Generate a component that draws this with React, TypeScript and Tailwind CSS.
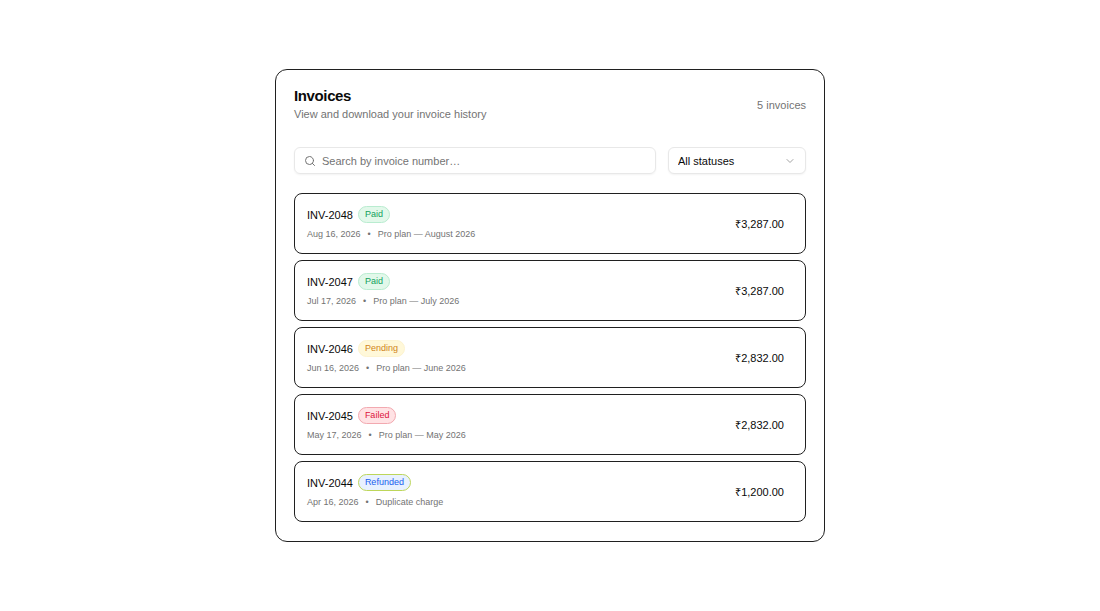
import { ChevronDown, Search } from "lucide-react";

type Status = "Paid" | "Pending" | "Failed" | "Refunded";

const badgeStyles: Record<Status, string> = {
  Paid: "bg-[#e2f8ea] border-[#b9ecd0] text-[#12a05c]",
  Pending: "bg-[#fff8d9] border-[#fdf3cf] text-[#d08420]",
  Failed: "bg-[#ffe2e4] border-[#f2a9b0] text-[#dc143c]",
  Refunded: "bg-[#e8f1ff] border-[#bdd65a] text-[#2060ee]",
};

const invoices: { id: string; status: Status; date: string; note: string; amount: string }[] = [
  { id: "INV-2048", status: "Paid", date: "Aug 16, 2026", note: "Pro plan — August 2026", amount: "₹3,287.00" },
  { id: "INV-2047", status: "Paid", date: "Jul 17, 2026", note: "Pro plan — July 2026", amount: "₹3,287.00" },
  { id: "INV-2046", status: "Pending", date: "Jun 16, 2026", note: "Pro plan — June 2026", amount: "₹2,832.00" },
  { id: "INV-2045", status: "Failed", date: "May 17, 2026", note: "Pro plan — May 2026", amount: "₹2,832.00" },
  { id: "INV-2044", status: "Refunded", date: "Apr 16, 2026", note: "Duplicate charge", amount: "₹1,200.00" },
];

export default function App() {
  return (
    <main className="flex min-h-screen items-center justify-center bg-white font-['Liberation_Sans',Arial,sans-serif] text-[11px] leading-4 text-[#0a0a0a]">
      <section className="w-1/2 rounded-xl border border-[#202020] px-[18px] pt-[17px] pb-[19px]">
        <header className="flex items-center justify-between">
          <div>
            <h1 className="text-[15px] leading-[18px] font-bold tracking-tight">Invoices</h1>
            <p className="leading-[18px] text-[#737373]">View and download your invoice history</p>
          </div>
          <p className="text-[#737373]">5 invoices</p>
        </header>

        <div className="mt-6 flex gap-3">
          <label className="flex h-[27px] flex-1 items-center gap-1.5 rounded-md border border-[#e8e8e8] px-[9px] shadow-xs">
            <Search className="size-3 text-[#737373]" strokeWidth={2} aria-hidden="true" />
            <input
              type="text"
              aria-label="Search invoices"
              placeholder="Search by invoice number…"
              className="min-w-0 flex-1 bg-transparent outline-none placeholder:text-[#737373]"
            />
          </label>
          <div className="grid w-[138px] items-center">
            <select
              aria-label="Status"
              className="col-start-1 row-start-1 h-[27px] w-full appearance-none rounded-md border border-[#e8e8e8] bg-white px-[9px] shadow-xs outline-none"
            >
              <option>All statuses</option>
              <option>Paid</option>
              <option>Pending</option>
              <option>Failed</option>
              <option>Refunded</option>
            </select>
            <ChevronDown
              className="pointer-events-none col-start-1 row-start-1 mr-2.5 size-3 justify-self-end text-[#a3a3a3]"
              strokeWidth={2}
              aria-hidden="true"
            />
          </div>
        </div>

        <ul className="mt-[19px] flex flex-col gap-1.5">
          {invoices.map((invoice) => (
            <li
              key={invoice.id}
              className="flex items-center justify-between rounded-lg border border-[#202020] py-3 pr-[21px] pl-3"
            >
              <div className="pb-px">
                <div className="flex items-center gap-[5px]">
                  <span>{invoice.id}</span>
                  <span
                    className={`rounded-full border px-1.5 text-[9px] leading-[15px] ${badgeStyles[invoice.status]}`}
                  >
                    {invoice.status}
                  </span>
                </div>
                <div className="mt-[5px] flex gap-[7px] text-[9px] leading-3 text-[#737373]">
                  <span>{invoice.date}</span>
                  <span>•</span>
                  <span>{invoice.note}</span>
                </div>
              </div>
              <span>{invoice.amount}</span>
            </li>
          ))}
        </ul>
      </section>
    </main>
  );
}
